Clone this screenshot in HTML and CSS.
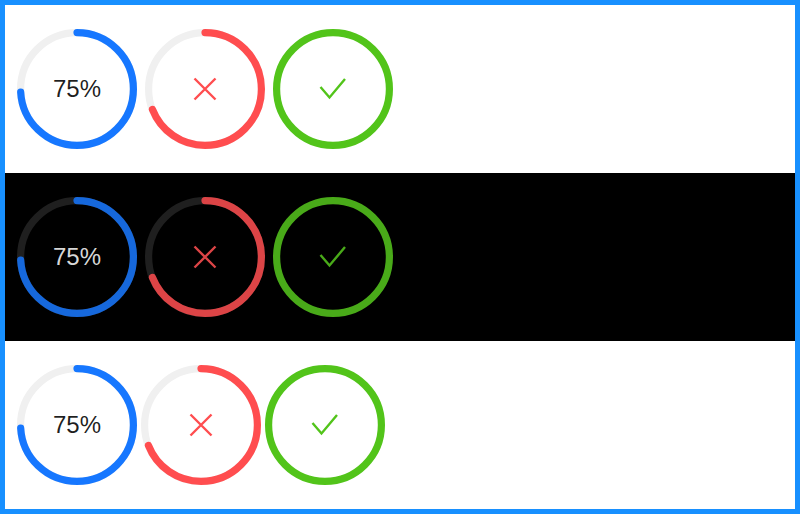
FILE: index.html
```html
<!DOCTYPE html>
<html lang="en">
<head>
    <meta charset="UTF-8">
    <title>Progress</title>
    <link rel="stylesheet" href="styles.css">
</head>
<body>
    <div class="frame">
        <section class="row">
            <div class="progress normal">
                <svg viewBox="0 0 120 120"><circle class="trail" cx="60" cy="60" r="56.4"/><circle class="arc" cx="60" cy="60" r="56.4" stroke-dasharray="262.2 354.4" transform="rotate(-90 60 60)"/></svg>
                <span class="text">75%</span>
            </div>
            <div class="progress exception">
                <svg viewBox="0 0 120 120"><circle class="trail" cx="60" cy="60" r="56.4"/><circle class="arc" cx="60" cy="60" r="56.4" stroke-dasharray="244.5 354.4" transform="rotate(-90 60 60)"/><path class="icon" d="M49.5 49.5 L70.5 70.5 M70.5 49.5 L49.5 70.5"/></svg>
            </div>
            <div class="progress success">
                <svg viewBox="0 0 120 120"><circle class="arc" cx="60" cy="60" r="56.4"/><polyline class="icon" points="47.5,58 56.5,68.5 72,50"/></svg>
            </div>
        </section>

        <section class="row dark">
            <div class="progress normal">
                <svg viewBox="0 0 120 120"><circle class="trail" cx="60" cy="60" r="56.4"/><circle class="arc" cx="60" cy="60" r="56.4" stroke-dasharray="262.2 354.4" transform="rotate(-90 60 60)"/></svg>
                <span class="text">75%</span>
            </div>
            <div class="progress exception">
                <svg viewBox="0 0 120 120"><circle class="trail" cx="60" cy="60" r="56.4"/><circle class="arc" cx="60" cy="60" r="56.4" stroke-dasharray="244.5 354.4" transform="rotate(-90 60 60)"/><path class="icon" d="M49.5 49.5 L70.5 70.5 M70.5 49.5 L49.5 70.5"/></svg>
            </div>
            <div class="progress success">
                <svg viewBox="0 0 120 120"><circle class="arc" cx="60" cy="60" r="56.4"/><polyline class="icon" points="47.5,58 56.5,68.5 72,50"/></svg>
            </div>
        </section>

        <section class="row tight">
            <div class="progress normal">
                <svg viewBox="0 0 120 120"><circle class="trail" cx="60" cy="60" r="56.4"/><circle class="arc" cx="60" cy="60" r="56.4" stroke-dasharray="262.2 354.4" transform="rotate(-90 60 60)"/></svg>
                <span class="text">75%</span>
            </div>
            <div class="progress exception">
                <svg viewBox="0 0 120 120"><circle class="trail" cx="60" cy="60" r="56.4"/><circle class="arc" cx="60" cy="60" r="56.4" stroke-dasharray="244.5 354.4" transform="rotate(-90 60 60)"/><path class="icon" d="M49.5 49.5 L70.5 70.5 M70.5 49.5 L49.5 70.5"/></svg>
            </div>
            <div class="progress success">
                <svg viewBox="0 0 120 120"><circle class="arc" cx="60" cy="60" r="56.4"/><polyline class="icon" points="47.5,58 56.5,68.5 72,50"/></svg>
            </div>
        </section>
    </div>
</body>
</html>
```

FILE: styles.css
```css
* {
    box-sizing: border-box;
}

body {
    margin: 0;
    font-family: "Liberation Sans", Arial, sans-serif;
}

.frame {
    width: 800px;
    height: 514px;
    border: 5px solid #1890ff;
    background-color: #fff;
}

.row {
    display: flex;
    gap: 8px;
    height: 168px;
    padding: 24px 12px;
}

.row.tight {
    gap: 4px;
}

.row.dark {
    background-color: #000;
}

.progress {
    display: grid;
    place-items: center;
    width: 120px;
    height: 120px;
}

.progress > * {
    grid-area: 1 / 1;
}

.progress svg {
    width: 120px;
    height: 120px;
    display: block;
}

.trail,
.arc {
    fill: none;
    stroke-width: 7.2;
}

.arc {
    stroke-linecap: round;
}

.trail {
    stroke: #f0f0f0;
}

.icon {
    fill: none;
    stroke-width: 2.4;
}

.text {
    font-size: 24px;
    line-height: 1;
    color: rgba(0, 0, 0, 0.88);
}

.normal .arc { stroke: #1677ff; }
.exception .arc { stroke: #ff4d4f; }
.exception .icon { stroke: #ff4d4f; }
.success .arc { stroke: #52c41a; }
.success .icon { stroke: #52c41a; }

.dark .trail { stroke: #1f1f1f; }
.dark .text { color: rgba(255, 255, 255, 0.85); }
.dark .normal .arc { stroke: #1668dc; }
.dark .exception .arc,
.dark .exception .icon { stroke: #dc4446; }
.dark .success .arc,
.dark .success .icon { stroke: #49aa19; }
```
